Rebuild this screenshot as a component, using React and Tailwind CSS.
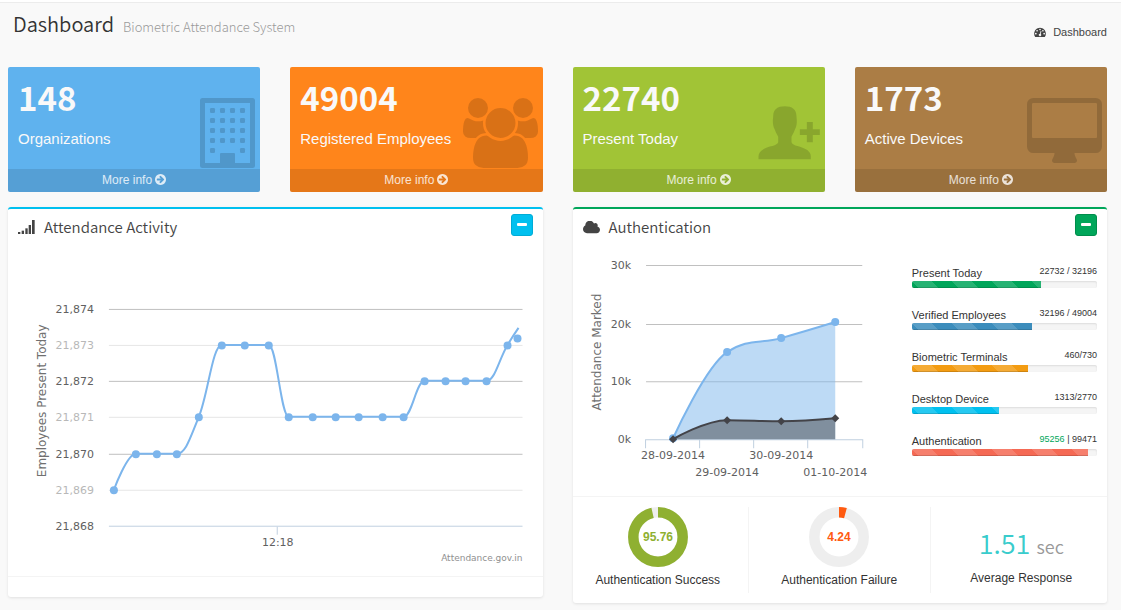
import React from "react";

const stats = [
  { value: "148", label: "Organizations", icon: BuildingIcon, card: "bg-[#5fb2ee]" },
  { value: "49004", label: "Registered Employees", icon: UsersIcon, card: "bg-[#ff851b]" },
  { value: "22740", label: "Present Today", icon: PersonAddIcon, card: "bg-[#a1c436]" },
  { value: "1773", label: "Active Devices", icon: DesktopIcon, card: "bg-[#ab7d45]" },
];

const progress = [
  { label: "Present Today", count: "22732 / 32196", percent: 70, color: "bg-[#00a65a]" },
  { label: "Verified Employees", count: "32196 / 49004", percent: 65, color: "bg-[#3c8dbc]" },
  { label: "Biometric Terminals", count: "460/730", percent: 63, color: "bg-[#f39c12]" },
  { label: "Desktop Device", count: "1313/2770", percent: 47, color: "bg-[#00c0ef]" },
  { label: "Authentication", done: "95256", count: " | 99471", percent: 95, color: "bg-[#f56954]" },
];

const headingFont = "font-['Source_Sans_Pro','Noto_Sans_CJK_SC',sans-serif]";

function BuildingIcon() {
  return (
    <svg className="h-[70px] w-[55px]" viewBox="0 0 55 70" fill="currentColor" aria-hidden="true">
      <path
        fillRule="evenodd"
        d="M2.5 0H52.500a2.500 2.500 0 0 1 2.500 2.500V67.500a2.500 2.500 0 0 1-2.500 2.500H2.500A2.500 2.500 0 0 1 0 67.500V2.500A2.500 2.500 0 0 1 2.500 0ZM5 5V65H20V56a1 1 0 0 1 1-1H34a1 1 0 0 1 1 1V65H50V5Z"
      />
      {[10, 20, 30, 40, 50].map((y) =>
        [10, 20, 30, 40]
          .filter((x) => y < 50 || x === 10 || x === 40)
          .map((x) => <rect key={`${x}-${y}`} x={x} y={y} width="5" height="5" rx="1.2" />)
      )}
    </svg>
  );
}

function UsersIcon() {
  return (
    <svg className="h-[70px] w-[75px]" viewBox="0 0 1920 1792" fill="currentColor" aria-hidden="true">
      <path d="M593 896q-162 5-265 128H194q-82 0-138-40.5T0 865q0-353 124-353 6 0 43.500 21t97.500 42.500T384 597q67 0 133-23-5 37-5 66 0 159 81 256zm1071 637q0 120-73 189.500t-194 69.500H523q-121 0-194-69.500T256 1533q0-53 3.500-103.500t14-109T300 1212t43-97.500 62-81 85.500-53.500T602 960q10 0 43 21.500t73 48 107 48 135 21.500 135-21.500 107-48 73-48 43-21.500q61 0 111.500 20t85.500 53.500 62 81 43 97.500 26.500 108.500 14 109 3.500 103.500zM640 256q0 106-75 181t-181 75-181-75-75-181 75-181T384 0t181 75 75 181zm704 384q0 159-112.500 271.500T960 1024 688.500 911.500 576 640t112.500-271.500T960 256t271.500 112.500T1344 640zm576 225q0 78-56 118.500t-138 40.500h-134q-103-123-265-128 81-97 81-256 0-29-5-66 66 23 133 23 59 0 119-21.500t97.500-42.500 43.500-21q124 0 124 353zm-128-609q0 106-75 181t-181 75-181-75-75-181 75-181 181-75 181 75 75 181z" />
    </svg>
  );
}

function PersonAddIcon() {
  return (
    <svg className="h-[70px] w-[62px]" viewBox="0 -25 185 210" fill="currentColor" aria-hidden="true">
      <path d="M80 0C58 0 45 9 45 30C45 36 44 38 44 44C44 52 45 62 50 70C54 82 60 88 60 92V106C60 112 52 116 38 120C14 127 1 136 1 150V159H158V150C158 136 145 127 121 120C107 116 100 112 100 106V92C100 88 106 82 110 70C115 62 116 52 116 44C116 38 115 36 115 30C115 9 102 0 80 0Z" />
      <path d="M146 47H164V69H185V86H164V108H146V86H125V69H146Z" />
    </svg>
  );
}

function DesktopIcon() {
  return (
    <svg className="h-[70px] w-[75px]" viewBox="0 0 1920 1792" fill="currentColor" aria-hidden="true">
      <path
        fillRule="evenodd"
        d="M1792 992V160q0-13-9.500-22.500T1760 128H160q-13 0-22.500 9.500T128 160v832q0 13 9.500 22.500T160 1024h1600q13 0 22.500-9.500T1792 992zm128-832v1088q0 66-47 113t-113 47h-544q0 37 16 77.500t32 71 16 43.500q0 26-19 45t-45 19H704q-26 0-45-19t-19-45q0-14 16-44t32-70 16-78H160q-66 0-113-47T0 1248V160Q0 94 47 47T160 0h1600q66 0 113 47t47 113z"
      />
    </svg>
  );
}

function ArrowCircleIcon() {
  return (
    <svg className="size-[11px]" viewBox="128 128 1536 1536" fill="currentColor" aria-hidden="true">
      <path d="M1413 896q0-27-18-45l-91-91-362-362q-18-18-45-18t-45 18l-91 91q-18 18-18 45t18 45l189 189h-502q-26 0-45 19t-19 45v128q0 26 19 45t45 19h502l-189 189q-19 19-19 45t19 45l91 91q18 18 45 18t45-18l362-362 91-91q18-18 18-45zm251 0q0 209-103 385.500t-279.500 279.500-385.500 103-385.500-103-279.500-279.500-103-385.500 103-385.500 279.500-279.500 385.500-103 385.500 103 279.500 279.500 103 385.500z" />
    </svg>
  );
}

function GaugeIcon() {
  return (
    <svg className="h-[10px] w-[12px]" viewBox="0 128 1792 1536" fill="currentColor" aria-hidden="true">
      <path d="M384 1152q0-53-37.500-90.500t-90.500-37.500-90.500 37.500-37.500 90.500 37.500 90.500 90.500 37.500 90.500-37.500 37.500-90.500zm192-448q0-53-37.500-90.500t-90.500-37.500-90.500 37.500-37.500 90.500 37.500 90.500 90.500 37.500 90.500-37.500 37.500-90.500zm428 481l101-382q6-26-7.500-48.500t-38.500-29.500-48 6.500-30 39.500l-101 382q-60 5-107 43.500t-63 98.500q-20 77 20 146t117 89 146-20 89-117q16-60-6-117t-72-91zm660-33q0-53-37.500-90.500t-90.500-37.500-90.500 37.500-37.500 90.500 37.500 90.500 90.500 37.500 90.500-37.500 37.500-90.500zm-640-640q0-53-37.500-90.500t-90.500-37.500-90.500 37.500-37.500 90.500 37.500 90.500 90.500 37.500 90.500-37.500 37.500-90.500zm448 192q0-53-37.500-90.500t-90.500-37.500-90.500 37.500-37.500 90.500 37.500 90.500 90.500 37.500 90.500-37.500 37.500-90.500zm320 448q0 261-141 483-19 29-54 29h-1402q-35 0-54-29-141-221-141-483 0-182 71-348t191-286 286-191 348-71 348 71 286 191 191 286 71 348z" />
    </svg>
  );
}

function SignalIcon() {
  return (
    <svg className="h-[14px] w-[17px]" viewBox="0 0 51 42" fill="currentColor" aria-hidden="true">
      <rect x="0" y="36" width="7" height="6" />
      <rect x="11" y="32" width="7" height="10" />
      <rect x="22" y="25" width="7" height="17" />
      <rect x="32" y="15" width="7" height="27" />
      <rect x="42" y="0" width="8" height="42" />
    </svg>
  );
}

function CloudIcon() {
  return (
    <svg className="h-[13px] w-[17px]" viewBox="64 256 1920 1280" fill="currentColor" aria-hidden="true">
      <path d="M1984 1152q0 159-112.500 271.500t-271.500 112.500h-1088q-185 0-316.500-131.500t-131.500-316.500q0-132 71-241.500t187-163.500q-2-28-2-43 0-212 150-362t362-150q158 0 286.500 88t187.500 230q70-62 166-62 106 0 181 75t75 181q0 75-41 138 129 30 213 134.500t84 239.500z" />
    </svg>
  );
}

// Smooth cubic path through the points, clamped so that it does not overshoot.
function spline(points) {
  let d = `M${points[0][0]} ${points[0][1]}`;
  let out = points[0];
  for (let i = 1; i < points.length; i++) {
    const [x, y] = points[i];
    const [lx, ly] = points[i - 1];
    let cx = x;
    let cy = y;
    let next = [x, y];
    if (i < points.length - 1) {
      const [nx, ny] = points[i + 1];
      cx = (1.5 * x + lx) / 2.5;
      cy = (1.5 * y + ly) / 2.5;
      const rx = (1.5 * x + nx) / 2.5;
      let ry = (1.5 * y + ny) / 2.5;
      const fix = ((ry - cy) * (rx - x)) / (rx - cx) + y - ry;
      cy += fix;
      ry += fix;
      if (cy > Math.max(ly, y)) {
        cy = Math.max(ly, y);
        ry = 2 * y - cy;
      } else if (cy < Math.min(ly, y)) {
        cy = Math.min(ly, y);
        ry = 2 * y - cy;
      }
      if (ry > Math.max(ny, y)) {
        ry = Math.max(ny, y);
        cy = 2 * y - ry;
      } else if (ry < Math.min(ny, y)) {
        ry = Math.min(ny, y);
        cy = 2 * y - ry;
      }
      next = [rx, ry];
    }
    d += `C${out[0]} ${out[1]} ${cx} ${cy} ${x} ${y}`;
    out = next;
  }
  return d;
}

const activityRows = [
  { label: "21,874", y: 70 },
  { label: "21,873", y: 106 },
  { label: "21,872", y: 142 },
  { label: "21,871", y: 178 },
  { label: "21,870", y: 215 },
  { label: "21,869", y: 251 },
  { label: "21,868", y: 287 },
];

const activityPoints = [
  [106, 251], [128, 215], [149, 215], [169, 215], [191, 178], [214, 106], [237, 106],
  [261, 106], [281, 178], [305, 178], [328, 178], [351, 178], [375, 178], [396, 178],
  [417, 142], [438, 142], [458, 142], [479, 142], [500, 106],
];

function ActivityChart() {
  return (
    <svg
      className="block h-auto w-full font-['Lucida_Grande','DejaVu_Sans',sans-serif] text-[11px]"
      viewBox="0 0 535 337"
      role="img"
      aria-label="Employees present today by time"
    >
      {activityRows.map((row, i) => {
        const last = i === activityRows.length - 1;
        return (
          <g key={row.label}>
            <path
              d={`M101 ${row.y + 0.5}H515`}
              stroke={last ? "#c0d0e0" : i % 2 ? "#e6e6e6" : "#c0c0c0"}
            />
            <text x="86" y={row.y + 4} textAnchor="end" fill={i % 2 ? "#b8b8b8" : "#606060"}>
              {row.label}
            </text>
          </g>
        );
      })}
      <path d="M269.5 288V296" stroke="#c0d0e0" />
      <text x="270" y="307" textAnchor="middle" fill="#606060">12:18</text>
      <text
        transform="translate(38 162) rotate(-90)"
        textAnchor="middle"
        fill="#707070"
        className="text-xs"
      >
        Employees Present Today
      </text>
      <path
        d={spline([...activityPoints, [511, 89]])}
        fill="none"
        stroke="#7cb5ec"
        strokeWidth="2"
        strokeLinejoin="round"
      />
      {[...activityPoints, [510, 99]].map(([x, y]) => (
        <circle key={x} cx={x} cy={y + 0.5} r="4" fill="#7cb5ec" />
      ))}
      <text x="515" y="322" textAnchor="end" fill="#909090" className="text-[9px]">
        Attendance.gov.in
      </text>
    </svg>
  );
}

const marked = [[90, 199], [144, 113], [198, 99], [252, 83]];
const failed = [[90, 200], [144, 181], [198, 182], [252, 179]];

function AuthenticationChart() {
  return (
    <svg
      className="block h-auto w-full font-['Lucida_Grande','DejaVu_Sans',sans-serif] text-[11px]"
      viewBox="0 0 300 257"
      role="img"
      aria-label="Attendance marked by day"
    >
      {[["30k", 26], ["20k", 85], ["10k", 142], ["0k", 200]].map(([label, y]) => (
        <g key={label}>
          {label !== "0k" && <path d={`M63 ${y + 0.5}H279`} stroke="#c0c0c0" />}
          <text x="48" y={y + 4} textAnchor="end" fill="#606060">{label}</text>
        </g>
      ))}
      <path
        d="M62.500 209V200.500H279.500V209M116.500 200.500V209M170.500 200.500V209M224.500 200.500V209"
        fill="none"
        stroke="#c0d0e0"
      />
      <text
        transform="translate(18 113) rotate(-90)"
        textAnchor="middle"
        fill="#707070"
        className="text-xs"
      >
        Attendance Marked
      </text>
      <path d={`${spline(marked)}V200H90Z`} fill="#7cb5ec" fillOpacity="0.5" />
      <path d={spline(marked)} fill="none" stroke="#7cb5ec" strokeWidth="2" />
      {marked.map(([x, y]) => (
        <circle key={x} cx={x} cy={y} r="4" fill="#7cb5ec" />
      ))}
      <path d={`${spline(failed)}V200H90Z`} fill="#434348" fillOpacity="0.5" />
      <path d={spline(failed)} fill="none" stroke="#434348" strokeWidth="2" />
      {failed.map(([x, y]) => (
        <path key={x} d={`M${x} ${y - 4}l4 4-4 4-4-4Z`} fill="#434348" />
      ))}
      {["28-09-2014", "29-09-2014", "30-09-2014", "01-10-2014"].map((day, i) => (
        <text key={day} x={90 + 54 * i} y={i % 2 ? 237 : 220} textAnchor="middle" fill="#606060">
          {day}
        </text>
      ))}
    </svg>
  );
}

function StatCard({ value, label, icon: Icon, card }) {
  return (
    <section className={`flex flex-col overflow-hidden rounded-[2px] ${card}`}>
      <div className="flex h-[102px] justify-between pl-[10px] pr-[5px]">
        <div className="pt-2 text-[#f9f9f9]">
          <h3 className={`text-[33px] leading-[44px] font-bold ${headingFont}`}>{value}</h3>
          <p className="mt-[10px] text-[15px] leading-5 whitespace-nowrap">{label}</p>
        </div>
        <div className="shrink-0 pt-[31px] text-black/15">
          <Icon />
        </div>
      </div>
      <a
        href="#"
        className="flex h-[23px] items-center justify-center gap-[3px] bg-black/10 pb-[2px] text-xs text-white/80"
      >
        More info <ArrowCircleIcon />
      </a>
    </section>
  );
}

function PanelHeader({ icon, title, button }) {
  return (
    <header className="flex h-[30px] items-start justify-between px-[10px] pt-[5px] text-[#444]">
      <div className="flex h-[26px] items-center gap-[9px]">
        {icon}
        <h3 className={`text-[15px] leading-[20px] font-[350] ${headingFont}`}>{title}</h3>
      </div>
      <button
        type="button"
        aria-label={`Collapse ${title}`}
        className={`flex size-[22px] items-center justify-center rounded-[3px] border pb-[2px] ${button}`}
      >
        <span className="h-[3px] w-[10px] rounded-[1px] bg-white" />
      </button>
    </header>
  );
}

function ProgressItem({ label, done, count, percent, color }) {
  return (
    <div>
      <div className="flex items-start justify-between text-[#333]">
        <span className="text-[11px] leading-4">{label}</span>
        <span className="text-[9px] leading-3 whitespace-pre">
          {done && <span className="text-[#00a65a]">{done}</span>}
          {count}
        </span>
      </div>
      <div className="h-[7px] overflow-hidden rounded-[2px] bg-[#f5f5f5] shadow-[inset_0_1px_2px_rgba(0,0,0,0.1)]">
        <div
          className={`h-full bg-[linear-gradient(45deg,rgba(255,255,255,.15)_25%,transparent_25%,transparent_50%,rgba(255,255,255,.15)_50%,rgba(255,255,255,.15)_75%,transparent_75%,transparent)] bg-size-[40px_40px] shadow-[inset_0_-1px_0_rgba(0,0,0,0.15)] ${color}`}
          style={{ width: `${percent}%` }}
        />
      </div>
    </div>
  );
}

function Donut({ value, color, track }) {
  const length = 2 * Math.PI * 24.7;
  return (
    <svg className="block size-[60px]" viewBox="0 0 60 60" role="img" aria-label={`${value} percent`}>
      <circle cx="30" cy="30" r="24.7" fill="none" stroke={track} strokeWidth="10.5" />
      <circle
        cx="30"
        cy="30"
        r="24.7"
        fill="none"
        stroke={color}
        strokeWidth="10.5"
        strokeDasharray={`${(length * value) / 100} ${length}`}
        transform="rotate(-90 30 30)"
      />
      <text x="30" y="34" textAnchor="middle" fill={color} className="text-xs font-bold">
        {value}
      </text>
    </svg>
  );
}

export default function App() {
  return (
    <div className="min-h-screen border-t-2 border-white bg-[#f9f9f9] font-['Liberation_Sans',Arial,sans-serif] text-[#333]">
      <div className="border-t border-[#ececec] pr-[14px] pb-[7px] pl-2">
        <header className="flex h-16 items-start justify-between pl-[5px]">
          <h1 className={`pt-[6px] text-[20px] leading-[30px] font-[350] ${headingFont}`}>
            Dashboard
            <small className="ml-[9px] text-[13px] font-light text-[#999]">Biometric Attendance System</small>
          </h1>
          <nav aria-label="Breadcrumb" className="pt-[21px]">
            <a href="#" className="flex items-center gap-[7px] text-[11px] leading-4 text-[#444]">
              <GaugeIcon /> Dashboard
            </a>
          </nav>
        </header>

        <main className="flex flex-col gap-[15px]">
          <div className="grid grid-cols-4 gap-[30px]">
            {stats.map((stat) => (
              <StatCard key={stat.label} {...stat} />
            ))}
          </div>

          <div className="grid grid-cols-2 items-start gap-[30px]">
            <section className="rounded-[3px] border-t-2 border-[#00c0ef] bg-white shadow-[0_1px_3px_rgba(0,0,0,0.1)]">
              <PanelHeader
                icon={<SignalIcon />}
                title="Attendance Activity"
                button="border-[#00acd6] bg-[#00c0ef]"
              />
              <ActivityChart />
              <div className="h-[21px] border-t border-[#f4f4f4]" />
            </section>

            <section className="rounded-[3px] border-t-2 border-[#00a65a] bg-white shadow-[0_1px_3px_rgba(0,0,0,0.1)]">
              <PanelHeader
                icon={<CloudIcon />}
                title="Authentication"
                button="border-[#008d4c] bg-[#00a65a]"
              />
              <div className="flex items-start gap-[29px] px-[10px]">
                <div className="min-w-0 flex-1">
                  <AuthenticationChart />
                </div>
                <div className="flex w-[36%] flex-col gap-[19px] pt-[26px]">
                  {progress.map((item) => (
                    <ProgressItem key={item.label} {...item} />
                  ))}
                </div>
              </div>
              <div className="border-t border-[#f4f4f4] px-[5px] py-[10px]">
                <div className="-mx-[10px] grid grid-cols-3 text-center text-xs leading-4">
                  <div className="flex h-[86px] flex-col items-center gap-[5px] border-r border-[#f4f4f4]">
                    <Donut value={95.76} color="#8fb031" track="#eeeeee" />
                    Authentication Success
                  </div>
                  <div className="flex h-[86px] flex-col items-center gap-[5px] border-r border-[#f4f4f4]">
                    <Donut value={4.24} color="#ff5a10" track="#eeeeee" />
                    Authentication Failure
                  </div>
                  <div className="flex h-[86px] flex-col items-center gap-2 pt-5">
                    <p className={`text-[27px] leading-8 font-[350] text-[#39cccc] ${headingFont}`}>
                      1.51 <small className="text-[18px] text-[#999]">sec</small>
                    </p>
                    Average Response
                  </div>
                </div>
              </div>
            </section>
          </div>
        </main>
      </div>
    </div>
  );
}
